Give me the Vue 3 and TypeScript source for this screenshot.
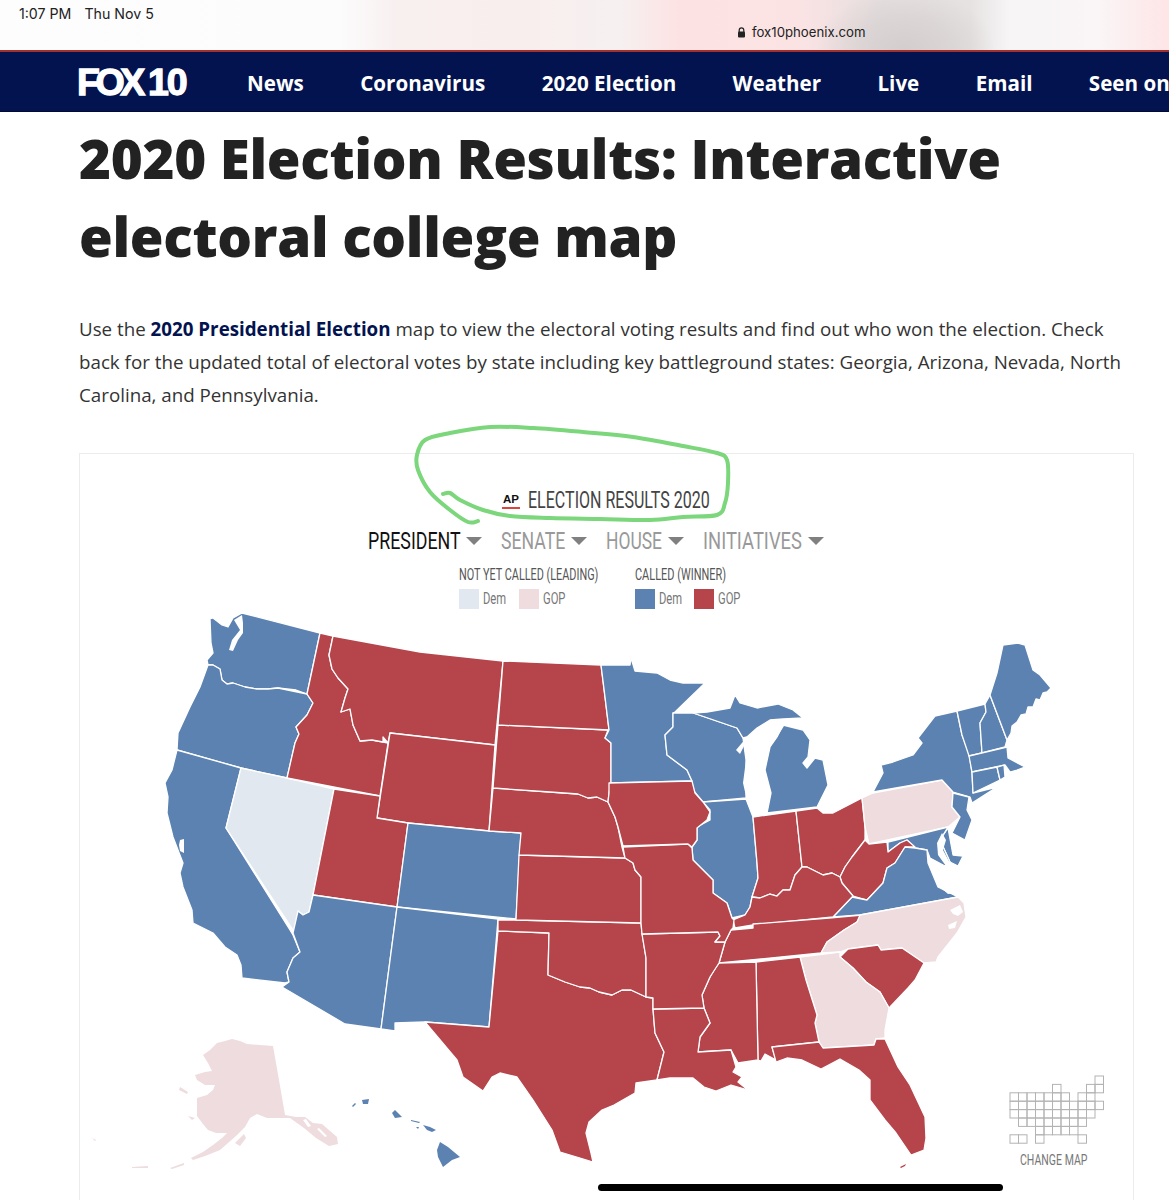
<script setup lang="ts">
interface Shape { pts: string; fill: string }
const R = '#b5444b', B = '#5b82b1', LR = '#eedcdf', LB = '#e1e8f0'

const raw: [string, string][] = [
  [B, '210,619 213,618 222,625 228,627 233,618 242,613 320,633 307,694 296,690 278,688 268,689 257,689 245,687 233,683 227,684 222,680 220,669 213,665 208,665 207,660 213,653 211,643'],
  [B, '307,694 313,703 307,715 296,727 299,734 295,743 287,778 241,768 177,750 178,733 190,707 200,687 208,665 213,665 220,669 222,680 227,684 233,683 245,687 257,689 268,689 278,688'],
  [B, '177,750 241,768 226,828 290,930 293,935 300,952 293,958 287,972 289,982 285,983 242,978 241,965 237,955 225,947 213,933 193,923 192,910 183,887 180,873 183,863 173,837 167,813 168,797 165,783 172,770'],
  [LB, '241,768 287,778 334,789 313,895 309,912 303,915 298,911 295,933 226,828'],
  [R, '320,633 333,636 329,655 332,669 338,678 348,689 345,698 341,712 350,709 353,725 360,741 372,740 383,742 388,743 380,796 287,778 295,743 299,734 296,727 307,715 313,703 307,694'],
  [R, '333,636 420,652 503,661 495,745 390,733 388,743 383,737 383,742 372,740 360,741 353,725 350,709 341,712 345,698 348,689 338,678 332,669 329,655'],
  [R, '390,733 495,745 489,831 408,823 377,818'],
  [R, '334,789 380,796 377,818 408,823 397,907 313,895'],
  [B, '408,823 489,831 521,833 516,919 397,907'],
  [B, '313,895 397,907 381,1029 345,1024 282,987 289,982 287,972 293,958 300,952 293,933 298,911 303,915 309,912'],
  [B, '397,907 498,919 489,1027 425,1022 395,1023 395,1031 381,1029'],
  [R, '498,931 549,933 548,975 565,982 580,987 590,988 599,992 612,995 622,990 631,990 646,997 653,998 653,1008 655,1033 664,1052 657,1080 636,1083 635,1093 614,1105 602,1110 589,1122 586,1133 591,1153 593,1162 580,1158 560,1152 552,1130 533,1100 517,1077 500,1073 492,1077 483,1091 463,1077 457,1060 425,1022 489,1027'],
  [R, '498,920 516,920 641,923 642,933 646,958 646,997 631,990 622,990 612,995 599,992 590,988 580,987 565,982 548,975 549,933 498,931'],
  [R, '519,855 625,858 633,863 635,870 641,877 641,923 516,920'],
  [R, '493,788 550,792 578,794 588,798 597,797 608,802 615,817 618,827 622,847 625,858 519,855 521,833 489,831'],
  [R, '498,725 608,730 605,738 611,743 611,782 609,793 608,802 597,797 588,798 578,794 550,792 493,788'],
  [R, '503,661 601,665 605,697 609,730 498,725'],
  [B, '601,665 630,665 631,658 635,671 657,673 670,680 683,683 705,683 675,712 673,713 673,727 665,735 667,755 687,770 692,781 611,783 611,743 605,738 609,730 605,697'],
  [B, '675,713 693,713 702,716 737,728 743,738 746,760 746,798 703,802 693,790 692,781 687,770 667,755 665,735 673,727 673,713'],
  [B, '693,713 707,712 730,708 735,695 740,703 757,708 778,704 793,710 803,718 783,719 770,720 757,728 747,737 743,738 737,728 702,716'],
  [B, '783,725 803,730 810,740 808,757 803,763 807,768 815,758 823,760 828,785 817,807 767,813 771,793 765,770 770,747 777,737'],
  [B, '703,802 746,799 753,817 757,863 758,878 752,897 750,907 745,915 732,918 727,903 713,893 713,880 693,860 692,847 697,840 697,827 710,820 710,810'],
  [R, '753,817 796,811 802,867 795,875 790,890 783,890 777,896 770,894 760,898 752,897 758,878 757,863'],
  [R, '796,811 817,808 823,813 833,813 862,798 865,827 865,840 852,857 845,867 840,877 832,873 823,875 807,867 802,867'],
  [LR, '862,798 873,793 942,780 953,792 952,807 960,817 948,827 869,844 865,827'],
  [B, '873,792 883,773 881,765 893,762 913,755 922,743 918,738 935,716 957,711 962,735 969,753 972,773 973,793 997,787 972,803 970,797 953,792 942,780'],
  [B, '957,711 985,704 986,712 980,723 982,753 969,756 962,735'],
  [B, '985,704 990,695 1007,740 1005,747 982,753 980,723 986,712'],
  [B, '990,695 997,673 1003,645 1018,643 1025,645 1033,670 1040,675 1051,688 1047,692 1043,693 1040,700 1036,699 1033,707 1028,707 1026,714 1021,715 1017,722 1012,726 1011,733 1007,740'],
  [B, '969,756 1007,747 1008,758 1025,767 1017,770 1010,772 1005,765 972,772'],
  [B, '972,772 997,767 1000,780 973,793'],
  [B, '997,767 1004,765 1005,777 1000,780'],
  [B, '953,793 969,797 967,810 972,820 965,840 952,833 960,817 952,807'],
  [B, '948,828 953,855 963,856 958,866 950,862 940,840'],
  [B, '888,842 948,827 940,840 950,862 945,866 930,858 927,850 915,848 907,840 900,843 888,852'],
  [R, '865,840 869,844 887,842 888,852 900,843 907,840 915,847 905,847 895,863 887,868 883,883 867,900 853,896 842,883 840,877 845,867 852,857'],
  [B, '833,917 852,897 867,900 883,883 887,868 895,863 905,847 915,848 927,850 928,863 938,887 958,897 860,915'],
  [R, '752,897 760,898 770,894 777,896 783,890 790,890 795,875 802,867 807,867 823,875 832,873 840,877 842,883 853,896 833,917 753,925 735,928 733,920 745,915 750,907'],
  [R, '731,930 753,928 753,924 829,918 862,915 857,922 844,930 827,942 821,953 719,963 725,942'],
  [LR, '860,915 958,897 964,903 966,917 957,933 938,957 936,962 924,963 902,948 881,950 878,945 848,949 840,952 821,953 827,942 844,930 857,922'],
  [R, '840,957 848,949 878,945 881,950 902,948 924,963 915,980 908,988 889,1008 880,992 866,982 853,968'],
  [LR, '800,957 840,952 840,957 853,968 866,982 880,992 889,1008 885,1030 885,1038 876,1039 874,1045 823,1048 819,1042 815,1023 817,1015 806,980'],
  [R, '756,962 800,957 806,980 817,1015 815,1023 819,1042 772,1047 776,1060 765,1054 761,1061 758,1060'],
  [R, '719,963 756,962 758,1060 738,1063 731,1050 698,1052 700,1037 710,1023 704,1008 702,995 710,977 716,967'],
  [R, '653,1009 704,1008 710,1023 700,1037 698,1052 731,1050 736,1067 733,1072 742,1077 738,1082 748,1090 731,1085 716,1091 704,1087 693,1078 670,1078 657,1080 664,1052 655,1033'],
  [R, '642,934 718,932 720,936 715,942 725,942 719,963 710,977 702,995 704,1008 653,1009 653,998 646,997 646,958'],
  [R, '623,847 688,844 692,848 693,860 713,880 713,893 727,903 732,918 734,920 733,928 731,930 725,942 715,942 720,936 718,932 642,934 641,923 641,877 635,870 633,863 625,858'],
  [R, '609,783 692,781 695,793 703,802 710,812 707,820 697,828 697,840 692,847 688,844 623,846 618,827 615,817 608,802 609,793'],
  [R, '772,1047 819,1042 823,1048 874,1045 876,1039 885,1039 898,1067 910,1085 925,1117 926,1138 924,1150 911,1155 896,1133 885,1120 870,1100 870,1080 859,1070 840,1059 821,1069 802,1060 787,1058 776,1062'],
]
const shapes: Shape[] = raw.map(([fill, pts]) => ({ fill, pts }))

// Alaska, Hawaii and the Keys sit alone on the page, so no white outline thins them.
const islands: Shape[] = ([
  [R, '900,1167 906,1164 905,1166 901,1168'],
  [LR, '232,1039 240,1041 247,1044 260,1045 273,1046 279,1080 285,1115 296,1117 305,1117 313,1123 322,1124 337,1137 338,1144 329,1146 316,1138 304,1128 290,1118 267,1118 257,1114 250,1118 245,1127 237,1135 228,1143 220,1150 205,1156 193,1160 191,1158 203,1152 213,1145 222,1138 227,1133 216,1133 208,1130 203,1124 197,1116 197,1105 197,1098 207,1095 213,1090 215,1085 205,1085 197,1080 195,1075 205,1072 212,1071 208,1063 203,1055 210,1050 217,1043 225,1041'],
  [LR, '235,1143 244,1134 246,1138 240,1146'],
  [LR, '180,1087 188,1092 187,1094 179,1090'],
  [LR, '188,1116 195,1118 192,1120'],
  [LR, '170,1168 184,1163 184,1165 172,1169'],
  [LR, '132,1167 148,1166 148,1168 132,1168'],
  [LR, '92,1138 96,1140 95,1141'],
  [B, '440,1142 448,1147 460,1157 452,1160 443,1167 438,1157 437,1150'],
  [B, '423,1125 430,1127 436,1130 432,1132 427,1130'],
  [B, '395,1110 402,1117 395,1118 392,1113'],
  [B, '362,1100 369,1099 368,1104 363,1104'],
  [B, '411,1120 420,1122 419,1123 411,1121'],
  [B, '416,1127 419,1127 418,1129'],
  [B, '352,1106 355,1103 356,1104 353,1107'],
] as [string, string][]).map(([fill, pts]) => ({ fill, pts }))

const water: string[] = [
  '242,615 234,620 240,630 232,640 229,650 233,651 238,640 243,633 243,623',
  '180,840 184,839 184,853 180,851 179,845',
  '743,738 747,737 736,750 740,754 747,740 760,728 770,720 783,719 784,726 777,737 770,747 765,770 771,793 767,813 757,817 748,805 743,783 746,760',
  '675,712 705,683 725,678 706,695 700,710 692,713',
  '984,801 1003,789 1003,793 985,805',
  '942,833 946,840 943,850 952,867 946,866 938,855 937,843',
  '940,887 950,892 953,880 950,870 955,870 957,880 955,893 948,894',
  '950,910 960,905 963,912 958,916 953,914',
  '948,925 957,921 955,928 949,929',
  '303,1120 308,1127 311,1126 306,1119',
  '317,1129 325,1137 327,1136 319,1128',
]

const sq = (w: number, s: number) => ({ width: w + 'px', '--s': String(s) })

const legendA = [{ c: LB, t: 'Dem', st: sq(24, 0.7) }, { c: LR, t: 'GOP', st: sq(23, 0.7) }]
const legendB = [{ c: B, t: 'Dem', st: sq(23, 0.7) }, { c: R, t: 'GOP', st: sq(23, 0.7) }]
const tabs = [
  { t: 'PRESIDENT', on: true, st: sq(92, 0.742) },
  { t: 'SENATE', on: false, st: sq(64, 0.736) },
  { t: 'HOUSE', on: false, st: sq(56, 0.727) },
  { t: 'INITIATIVES', on: false, st: sq(99, 0.767) },
]
const nav = ['News', 'Coronavirus', '2020 Election', 'Weather', 'Live', 'Email', 'Seen on']

const rows: number[][] = [
  [10], [5, 9, 10], [0, 1, 2, 3, 4, 5, 6, 8, 9],
  [0, 1, 2, 3, 4, 5, 6, 7, 8, 9, 10], [0, 1, 2, 3, 4, 5, 6, 7, 8, 9],
  [1, 2, 3, 4, 5, 6, 7, 8], [3, 4, 5, 6, 7], [0, 1, 3, 8],
]
const cells = rows.flatMap((r, y) => r.map(x => ({ x: 1 + x * 8.5, y: 1 + y * 8.4 })))

const ink: [number, number][] = [
  [478, 521], [468, 522], [450, 510], [430, 492], [418, 470], [417, 455], [425, 440], [450, 433], [490, 427],
  [533, 428], [583, 432], [633, 437], [683, 446], [717, 453], [727, 460], [728, 483], [725, 503], [717, 515],
  [683, 517], [650, 520], [600, 519], [550, 518], [510, 516], [483, 510], [460, 500], [450, 493], [443, 494],
]
function smooth(p: [number, number][]): string {
  let d = `M${p[0][0]} ${p[0][1]}`
  for (let i = 0; i < p.length - 1; i++) {
    const a = p[Math.max(i - 1, 0)], b = p[i], c = p[i + 1], e = p[Math.min(i + 2, p.length - 1)]
    d += ` C${b[0] + (c[0] - a[0]) / 6} ${b[1] + (c[1] - a[1]) / 6} ${c[0] - (e[0] - b[0]) / 6} ${c[1] - (e[1] - b[1]) / 6} ${c[0]} ${c[1]}`
  }
  return d
}
const inkPath = smooth(ink)
</script>

<template>
  <div class="page">
    <header class="status">
      <div class="clock"><span>1:07 PM</span><span>Thu Nov 5</span></div>
      <div class="url">
        <svg class="lock" width="9" height="11" viewBox="0 0 9 11"><path d="M2.2 5V3.2a2.3 2.3 0 0 1 4.6 0V5" fill="none" stroke="#222" stroke-width="1.2"/><rect x="1" y="4.6" width="7" height="6" rx="1" fill="#222"/></svg>
        <span>fox10phoenix.com</span>
      </div>
    </header>
    <nav class="nav">
      <div class="logo"><span class="fox">FOX</span><span class="ten">10</span></div>
      <a v-for="n in nav" :key="n">{{ n }}</a>
    </nav>
    <main class="content">
      <h1>2020 Election Results: Interactive electoral college map</h1>
      <p class="lead">Use the <b>2020 Presidential Election</b> map to view the electoral voting results and find out who won the election. Check back for the updated total of electoral votes by state including key battleground states: Georgia, Arizona, Nevada, North Carolina, and Pennsylvania.</p>
      <section class="card">
        <div class="brand">
          <div class="ap"><span>AP</span><i></i></div>
          <span class="sq brand-text" :style="sq(182, 0.697)"><span>ELECTION RESULTS 2020</span></span>
        </div>
        <div class="tabs">
          <div v-for="t in tabs" :key="t.t" class="tab" :class="{ on: t.on }">
            <span class="sq" :style="t.st"><span>{{ t.t }}</span></span><i class="caret"></i>
          </div>
        </div>
        <div class="legend">
          <div class="lg first">
            <div class="lg-title"><span class="sq" :style="sq(139, 0.678)"><span>NOT YET CALLED (LEADING)</span></span></div>
            <div class="lg-row">
              <div v-for="l in legendA" :key="l.t" class="lg-item"><i :style="{ background: l.c }"></i><span class="sq" :style="l.st"><span>{{ l.t }}</span></span></div>
            </div>
          </div>
          <div class="lg">
            <div class="lg-title"><span class="sq" :style="sq(91, 0.684)"><span>CALLED (WINNER)</span></span></div>
            <div class="lg-row">
              <div v-for="l in legendB" :key="l.t" class="lg-item"><i :style="{ background: l.c }"></i><span class="sq" :style="l.st"><span>{{ l.t }}</span></span></div>
            </div>
          </div>
        </div>
        <div class="map-wrap">
          <svg class="map" viewBox="80 612 1052 588" width="1052" height="588">
            <polygon v-for="(s, i) in shapes" :key="i" :points="s.pts" :fill="s.fill" stroke="#fff" stroke-width="1.3" stroke-linejoin="round"/>
            <polygon v-for="(s, i) in islands" :key="'i' + i" :points="s.pts" :fill="s.fill"/>
            <polygon v-for="(w, i) in water" :key="'w' + i" :points="w" fill="#fff"/>
          </svg>
          <div class="change">
            <svg width="96" height="72" viewBox="0 0 96 72">
              <rect v-for="(c, i) in cells" :key="i" :x="c.x" :y="c.y" width="8.5" height="8.4" fill="none" stroke="#b3b3b3" stroke-width="1"/>
            </svg>
            <span class="sq cm" :style="sq(69, 0.68)"><span>CHANGE MAP</span></span>
          </div>
        </div>
      </section>
    </main>
    <svg class="ink" width="1169" height="1200" viewBox="0 0 1169 1200"><path :d="inkPath" fill="none" stroke="#7cd67b" stroke-width="4" stroke-linecap="round" stroke-linejoin="round"/></svg>
    <div class="home"></div>
  </div>
</template>

<style>
html, body { margin: 0; background: #fff; }
</style>

<style scoped>
.page { position: relative; width: 1169px; height: 1200px; overflow: hidden; background: #fff; font-family: "Open Sans", sans-serif; }
.status { height: 50px; box-sizing: border-box; position: relative; font-family: Inter, sans-serif; color: #222; font-size: 13.2px;
  background:
    radial-gradient(ellipse 90px 60px at 905px 50px, #d3cdcd 0%, rgba(211,205,205,.55) 55%, rgba(211,205,205,0) 100%),
    linear-gradient(90deg, #fdfdfe 0, #fcfcfd 340px, #f8efef 400px, #f9eeee 520px, #f6f0f0 620px, #fde2e3 680px, #fbe3e4 800px, #e6dfdf 880px, #e6e2e2 970px, #f7f5f6 1010px, #faf5f6 1100px, #fee5e6 1169px);
}
.clock { position: absolute; left: 19px; top: 6px; display: flex; gap: 13px; line-height: 16px; font-size: 14.2px; }
.url { position: absolute; left: 737px; top: 24px; display: flex; align-items: center; gap: 6px; line-height: 16px; }
.nav { height: 62px; box-sizing: border-box; background: #02134f; border-top: 2px solid #a1302f; border-bottom: 1px solid #010b33; display: flex; align-items: center; color: #fff; white-space: nowrap; overflow: hidden; padding-left: 76px; font-weight: 700; font-size: 20.6px; }
.nav a { margin-right: 56.4px; position: relative; top: 1px; }
.logo { width: 171px; flex: none; display: flex; align-items: baseline; font-family: "Liberation Sans", sans-serif; font-weight: 700; font-size: 37.5px; -webkit-text-stroke: 1.3px #fff; position: relative; top: 1px; left: 1px; }
.fox { letter-spacing: -4.4px; }
.ten { margin-left: 7px; letter-spacing: -2px; }
.content { padding: 8px 35px 0 79px; }
h1 { margin: -1px 0 0; font-size: 54.65px; line-height: 78px; font-weight: 800; color: #222; letter-spacing: -.3px; }
.lead { margin: 37px 0 0; font-size: 18.75px; line-height: 33px; color: #333; }
.lead b { color: #02134f; font-weight: 700; }
.card { margin-top: 42px; height: 800px; border: 1px solid #ececec; box-sizing: border-box; font-family: Roboto, sans-serif; font-weight: 400; }
.sq { display: inline-block; white-space: nowrap; overflow: visible; }
.sq > span { display: inline-block; transform: scaleX(var(--s)); transform-origin: 0 50%; }
.brand { display: flex; align-items: center; gap: 8px; margin-top: 34px; height: 26px; color: #444; padding-left: 422px; }
.brand-text { font-size: 23px; line-height: 26px; }
.ap { display: flex; flex-direction: column; align-items: center; width: 18px; font-family: "Liberation Sans", sans-serif; font-weight: 700; font-size: 11.5px; line-height: 11px; color: #111; }
.ap i { display: block; width: 18px; height: 2px; background: #d9473c; margin-top: 2px; }
.tabs { display: flex; gap: 19px; margin-top: 13px; height: 28px; align-items: center; font-size: 24px; color: #999; padding-left: 288px; }
.tab { display: flex; align-items: center; gap: 6px; }
.tab.on { color: #111; }
.caret { display: block; width: 0; height: 0; border-left: 8px solid transparent; border-right: 8px solid transparent; border-top: 8px solid #808080; }
.legend { display: flex; margin-top: 10px; padding-left: 379px; color: #555; }
.lg.first { width: 176px; }
.lg-title { font-size: 16px; line-height: 20px; color: #555; }
.lg-row { display: flex; gap: 12px; margin-top: 3px; }
.lg-item { display: flex; align-items: center; gap: 4px; font-size: 16px; color: #777; height: 21px; }
.lg-item i { display: block; width: 20px; height: 20px; }
.map-wrap { position: relative; margin-top: 3px; height: 588px; }
.map { display: block; }
.change { position: absolute; left: 929px; top: 463px; display: flex; flex-direction: column; align-items: center; width: 96px; color: #777; font-size: 15.5px; gap: 4px; }
.cm { margin-right: 5px; }
.ink { position: absolute; left: 0; top: 0; pointer-events: none; }
.home { position: absolute; left: 598px; top: 1184px; width: 405px; height: 7px; border-radius: 4px; background: #000; }
</style>
